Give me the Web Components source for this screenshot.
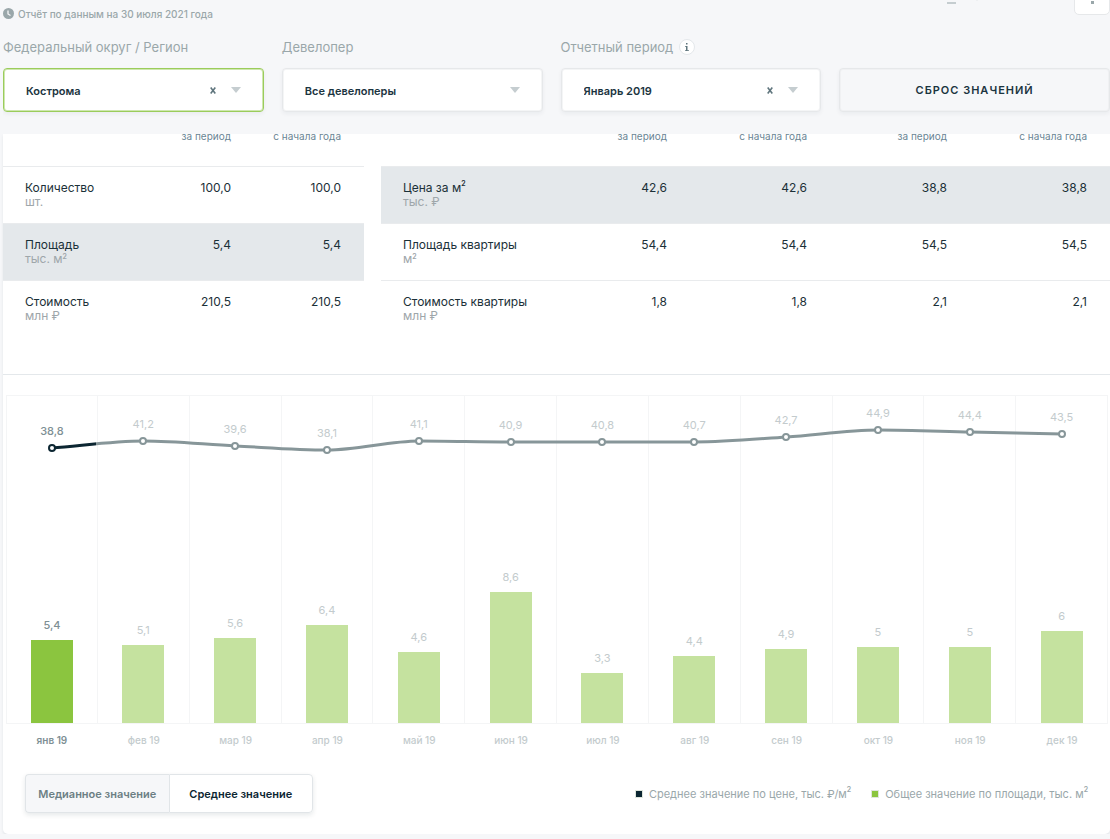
<!DOCTYPE html>
<html lang="ru">
<head>
<meta charset="utf-8">
<title>Отчёт</title>
<meta name="viewport" content="width=device-width, initial-scale=1">
<style>
  html { background: #f6f7f9; }
  body {
    margin: 0;
    font-family: Inter, "Liberation Sans", sans-serif;
    color: #1b3038;
    --muted: #9aa7aa;
    --line: #e9ebed;
    --green: #8bc53f;
    --green-soft: #c5e29f;
    --ink: #1b3440;
  }
</style>
</head>
<body>
<report-page></report-page>

<template id="report-page">
  <style>
    :host { display: block; padding-left: 3px; }
    header { position: relative; z-index: 1; height: 134px; background: #f6f7f9; overflow: hidden; }
    .top { display: flex; justify-content: space-between; align-items: flex-start; height: 39px; }
    .date { display: flex; align-items: center; gap: 4px; margin: 0; padding-top: 7px; font-size: 10px; line-height: 14px; font-weight: 500; color: var(--muted); }
    .date svg { display: block; margin-bottom: 2px; }
    .tools { display: flex; align-items: flex-end; margin-top: -21px; height: 36px; }
    .tools button { border: 0; background: none; padding: 0; }
    .tools .icon { padding-bottom: 11px; }
    .tools .more { padding-bottom: 14px; margin: 0 95px 0 19px; }
    .tools .menu { box-sizing: border-box; width: 36px; height: 36px; border: 1px solid #e6e8ea; border-radius: 5px; background: #fff; }
    .tools svg { display: block; margin: auto; }
    .tools .menu svg { margin-top: 0; }
    .filters { display: grid; grid-template-columns: 261fr 261fr 261fr 271fr; column-gap: 18px; align-items: end; }
    .reset { box-sizing: border-box; height: 44px; margin-bottom: 1px; border: 1px solid #e6e8ea; border-radius: 4px; background: #f6f7f9; box-shadow: inset 0 0 0 1px #f0f1f3, 0 2px 4px #0c26320d; font: 600 11px/16px Inter, sans-serif; letter-spacing: 1px; color: var(--ink); }
    main { background: #fff; border-radius: 0 0 5px 5px; box-shadow: 0 2px 3px #0c263214; }
    .tables { display: grid; grid-template-columns: 361fr 729fr; column-gap: 17px; height: 240px; border-bottom: 1px solid #e4e8eb; }
    .foot { display: flex; justify-content: space-between; align-items: center; padding: 0 22px 21px; }
    .legend { display: flex; gap: 20px; margin: 0; padding: 0; list-style: none; font-size: 11px; line-height: 16px; color: var(--muted); }
    .legend li { display: flex; align-items: center; gap: 6px; }
    .legend i { width: 6px; height: 6px; border: 1px solid #dfe6dd; background: var(--c); }
    sup { font-size: 7px; line-height: 0; font-weight: 600; vertical-align: 6px; }
  </style>
  <header>
    <div class="top">
      <p class="date">
        <svg width="11" height="11" viewBox="0 0 11 11" aria-hidden="true"><circle cx="5.500" cy="5.500" r="5.500" fill="#9aa7aa"/><path d="M5 2.500V6l2.500 1.500" fill="none" stroke="#f6f7f9" stroke-width="1.300"/></svg>
        <span>Отчёт по данным на 30 июля 2021 года</span>
      </p>
      <div class="tools">
        <button class="icon" type="button" aria-label="Скачать"><svg width="9" height="14" viewBox="0 0 9 14"><path d="M4.500 1v7M2 6l2.500 2.500L7 6" fill="none" stroke="#c5cdd0" stroke-width="1.500"/><path d="M0 12h9v2H0z" fill="#c5cdd0"/></svg></button>
        <button class="more" type="button" aria-label="Ещё"><svg width="4" height="8" viewBox="0 0 4 8"><path d="M0 0h4v4L2 8 0 4z" fill="#d5dbdd"/></svg></button>
        <button class="menu" type="button" aria-label="Меню"><svg width="3" height="13" viewBox="0 0 3 13"><path d="M0 0h3v3H0zM0 5h3v3H0zM0 10h3v3H0z" fill="#9aa7aa"/></svg></button>
      </div>
    </div>
    <div class="filters">
      <filter-field label="Федеральный округ / Регион" value="Кострома" clearable active></filter-field>
      <filter-field label="Девелопер" value="Все девелоперы"></filter-field>
      <filter-field label="Отчетный период" value="Январь 2019" clearable>
        <info-hint slot="hint"></info-hint>
      </filter-field>
      <button class="reset" type="button">СБРОС ЗНАЧЕНИЙ</button>
    </div>
  </header>
  <main>
    <div class="tables">
      <figures-table id="totals"></figures-table>
      <figures-table id="prices" wide></figures-table>
    </div>
    <month-chart></month-chart>
    <div class="foot">
      <value-toggle></value-toggle>
      <ul class="legend">
        <li><i style="--c: #0c2632"></i><span>Среднее значение по цене, тыс. ₽/м<sup>2</sup></span></li>
        <li><i style="--c: #8bc53f"></i><span>Общее значение по площади, тыс. м<sup>2</sup></span></li>
      </ul>
    </div>
  </main>
</template>

<template id="info-hint">
  <style>
    :host { display: block; }
    button { display: block; width: 16px; height: 16px; padding: 0; border: 1px solid #e4e8eb; border-radius: 50%; background: #fff; }
    svg { display: block; margin: auto; }
  </style>
  <button type="button" aria-label="Справка"><svg width="4" height="8" viewBox="0 0 4 8"><path d="M1 0h1.500v1.500H1zM0 3h2.500v4.200H4V8H0v-.8h1V3.800H0z" fill="#5f757d"/></svg></button>
</template>

<template id="filter-field">
  <style>
    :host { display: block; min-width: 0; }
    .head { display: flex; align-items: center; gap: 6px; height: 16px; margin-bottom: 13px; }
    label { font-size: 13px; line-height: 16px; color: var(--muted); }
    .box { box-sizing: border-box; display: flex; align-items: center; height: 44px; margin-bottom: 1px; padding-right: 22px; border: 1px solid #e6e8ea; border-radius: 4px; background: #fff; box-shadow: inset 0 0 0 1px #f4f5f6, 0 2px 4px #0c26320d; }
    :host([active]) .box { border-color: #9bcc5b; box-shadow: inset 0 0 0 1px #cfe7b0, 0 2px 4px #0c26320d; }
    select { flex: 1; min-width: 0; height: 100%; padding: 2px 0 0 22px; border: 0; outline: 0; background: none; appearance: none; font: 600 11px/16px Inter, sans-serif; color: var(--ink); }
    button { display: none; width: 16px; height: 16px; margin-right: 10px; padding: 0; border: 0; background: none; }
    :host([clearable]) button { display: block; }
    svg { display: block; margin: auto; }
    .arrow { margin: 0; }
  </style>
  <div class="head"><label for="s"></label><slot name="hint"></slot></div>
  <div class="box">
    <select id="s"><option></option></select>
    <button type="button" aria-label="Очистить"><svg width="6" height="7" viewBox="0 0 6 7"><path d="M.7.500l4.600 6M5.300.500L.7 6.500" stroke="#5f757d" stroke-width="1.600"/></svg></button>
    <svg class="arrow" width="10" height="6" viewBox="0 0 10 6" aria-hidden="true"><path d="M0 0h10L5 6z" fill="#c5cdd0"/></svg>
  </div>
</template>

<template id="figures-table">
  <style>
    :host { display: block; --col: 110px; }
    :host([wide]) { --col: 140px; }
    table { width: 100%; border-collapse: collapse; table-layout: fixed; }
    col.num { width: var(--col); }
    thead th { height: 32px; padding: 0 23px 0 0; vertical-align: top; text-align: right; font-size: 10px; line-height: 5px; font-weight: 400; color: #6a8594; }
    tbody th, tbody td { box-sizing: border-box; height: 57px; padding: 14px 23px 0 0; vertical-align: top; border-top: 1px solid var(--line); font-size: 12px; line-height: 14px; font-weight: 400; text-align: right; }
    tbody th { padding: 14px 0 0 22px; text-align: left; font-weight: 400; }
    tr.on { background: #e4e8eb; }
    small { display: block; font-size: 12px; line-height: 14px; color: #9ea6aa; }
    sup { font-size: 7px; line-height: 0; font-weight: 600; vertical-align: 6px; }
    small sup { vertical-align: 4px; }
  </style>
  <table>
    <colgroup></colgroup>
    <thead><tr></tr></thead>
    <tbody></tbody>
  </table>
</template>

<template id="month-chart">
  <style>
    :host { display: block; padding: 20px 2px 27px 3px; }
    .plot { position: relative; display: grid; grid-template-columns: repeat(12, 1fr); }
    .line { position: absolute; z-index: 1; inset: 0 0 auto; width: 100%; height: 100px; }
    .line path { fill: none; stroke-width: 3px; vector-effect: non-scaling-stroke; }
  </style>
  <div class="plot">
    <svg class="line" viewBox="0 0 1200 100" preserveAspectRatio="none" aria-hidden="true">
      <defs><linearGradient id="g" gradientUnits="userSpaceOnUse" x1="0" x2="1200" y1="0" y2="0">
        <stop offset="8.200%" stop-color="#0c2632"/><stop offset="8.200%" stop-color="#879699"/>
      </linearGradient></defs>
      <path stroke="url(#g)"/>
    </svg>
  </div>
</template>

<template id="month-column">
  <style>
    :host { display: block; min-width: 0; color: #c3cbcd; font-size: 11px; line-height: 14px; text-align: center; --dot: #879699; --bar: var(--green-soft); }
    :host([active]) { color: #7e8f94; --dot: #0c2632; --bar: var(--green); }
    .cell { position: relative; box-sizing: border-box; display: flex; flex-direction: column; justify-content: flex-end; align-items: center; gap: 8px; height: 328px; border: solid #f4f5f6; border-width: 1px 1px 0 0; }
    :host(:first-of-type) .cell { border-left-width: 1px; }
    .bar { width: 42px; background: var(--bar); }
    .point { position: absolute; z-index: 2; left: 0; right: 0; display: flex; flex-direction: column; align-items: center; gap: 6px; }
    .point i { box-sizing: border-box; width: 8px; height: 8px; border: 2px solid var(--dot); border-radius: 50%; background: #fff; }
    .month { padding-top: 9px; border-top: 1px solid #f4f5f6; font-size: 10px; font-weight: 500; }
    :host([active]) span { font-weight: 500; }
    :host([active]) .month { font-weight: 600; }
  </style>
  <div class="cell"><div class="point"><span class="price"></span><i></i></div><span class="area"></span><div class="bar"></div></div>
  <div class="month"></div>
</template>

<template id="value-toggle">
  <style>
    :host { display: flex; width: 288px; border-radius: 4px; box-shadow: 0 2px 5px #0c26321a; }
    button { box-sizing: border-box; flex: 1; height: 39px; padding: 0; border: 1px solid #e1e5e8; font: 600 11px/16px Inter, sans-serif; white-space: nowrap; }
    .off { border-right-width: 0; border-radius: 4px 0 0 4px; background: #f6f7f9; color: #6c7f84; }
    .on { border-radius: 0 4px 4px 0; background: #fff; color: #0c2632; }
  </style>
  <button class="off" type="button" aria-pressed="false">Медианное значение</button>
  <button class="on" type="button" aria-pressed="true">Среднее значение</button>
</template>

<script>
  const define = (name, setup) => customElements.define(name, class extends HTMLElement {
    connectedCallback() {
      if (this.shadowRoot) return;
      const root = this.attachShadow({ mode: 'open' });
      root.append(document.getElementById(name).content.cloneNode(true));
      if (setup) setup(this, root);
    }
  });

  const sup = text => text.replace('²', '<sup>2</sup>');

  define('info-hint');
  define('value-toggle');

  define('filter-field', (host, root) => {
    root.querySelector('label').textContent = host.getAttribute('label');
    root.querySelector('option').textContent = host.getAttribute('value');
  });

  const tables = {
    totals: {
      heads: ['за период', 'с начала года'],
      rows: [
        ['Количество', 'шт.', '100,0', '100,0'],
        ['Площадь', 'тыс. м²', '5,4', '5,4'],
        ['Стоимость', 'млн ₽', '210,5', '210,5']
      ],
      selected: 1
    },
    prices: {
      heads: ['за период', 'с начала года', 'за период', 'с начала года'],
      rows: [
        ['Цена за м²', 'тыс. ₽', '42,6', '42,6', '38,8', '38,8'],
        ['Площадь квартиры', 'м²', '54,4', '54,4', '54,5', '54,5'],
        ['Стоимость квартиры', 'млн ₽', '1,8', '1,8', '2,1', '2,1']
      ],
      selected: 0
    }
  };

  define('figures-table', (host, root) => {
    const { heads, rows, selected } = tables[host.id];
    root.querySelector('colgroup').innerHTML = '<col>' + heads.map(() => '<col class="num">').join('');
    root.querySelector('thead tr').innerHTML = '<td></td>' + heads.map(h => `<th scope="col">${h}</th>`).join('');
    root.querySelector('tbody').innerHTML = rows.map(([name, unit, ...nums], i) =>
      `<tr class="${i === selected ? 'on' : ''}"><th scope="row">${sup(name)}<small>${sup(unit)}</small></th>` +
      nums.map(n => `<td>${n}</td>`).join('') + '</tr>').join('');
  });

  // month, price label, line distance from the plot top, area label, bar height
  const months = [
    ['янв 19', '38,8', 53, '5,4', 83], ['фев 19', '41,2', 46, '5,1', 78],
    ['мар 19', '39,6', 51, '5,6', 85], ['апр 19', '38,1', 55, '6,4', 98],
    ['май 19', '41,1', 46, '4,6', 71], ['июн 19', '40,9', 47, '8,6', 131],
    ['июл 19', '40,8', 47, '3,3', 50], ['авг 19', '40,7', 47, '4,4', 67],
    ['сен 19', '42,7', 42, '4,9', 74], ['окт 19', '44,9', 35, '5', 76],
    ['ноя 19', '44,4', 37, '5', 76], ['дек 19', '43,5', 39, '6', 92]
  ];

  define('month-column', (host, root) => {
    const [month, price, y, area, bar] = months[host.dataset.index];
    root.querySelector('.month').textContent = month;
    root.querySelector('.price').textContent = price;
    root.querySelector('.area').textContent = area;
    root.querySelector('.bar').style.height = bar + 'px';
    root.querySelector('.point').style.top = (y - 25) + 'px';
  });

  define('month-chart', (host, root) => {
    const pts = months.map((m, i) => [50 + i * 100, m[2]]);
    // Horizontal tangents at the turning points keep the curve inside its data.
    const tangent = i => {
      const a = pts[i][1] - pts[i - 1][1];
      const b = pts[i + 1][1] - pts[i][1];
      return a * b <= 0 ? 0 : (a + b) / 2;
    };
    let d = `M${pts[0]}`;
    for (let i = 1; i < pts.length; i++) {
      const [x0, y0] = pts[i - 1], [x1, y1] = pts[i];
      const t0 = i === 1 ? y1 - y0 : tangent(i - 1);
      const t1 = i === pts.length - 1 ? y1 - y0 : tangent(i);
      d += `C${x0 + 33} ${y0 + t0 / 3} ${x1 - 33} ${y1 - t1 / 3} ${x1} ${y1}`;
    }
    root.querySelector('path').setAttribute('d', d);
    const plot = root.querySelector('.plot');
    months.forEach((m, i) => {
      const col = document.createElement('month-column');
      col.dataset.index = i;
      if (i === 0) col.setAttribute('active', '');
      plot.append(col);
    });
  });

  define('report-page');
</script>
</body>
</html>
